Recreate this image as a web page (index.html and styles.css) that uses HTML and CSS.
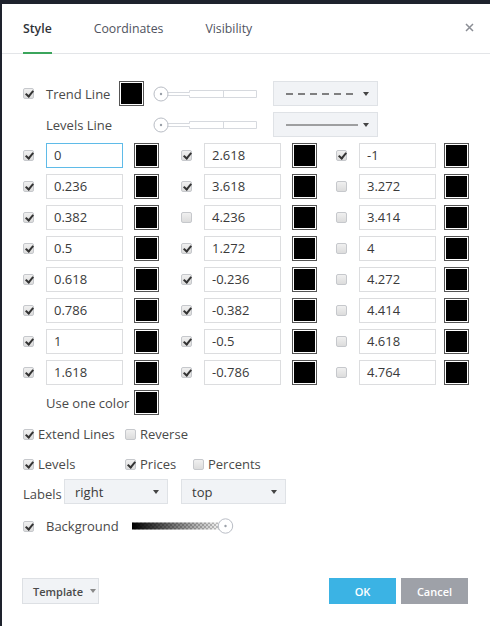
FILE: index.html
```html
<!DOCTYPE html>
<html>
<head>
<meta charset="utf-8">
<link rel="stylesheet" href="styles.css">
</head>
<body>
<div class="dialog">
  <div class="tabs">
    <div class="tab active">Style</div>
    <div class="tab">Coordinates</div>
    <div class="tab">Visibility</div>
    <div class="close"><svg width="9" height="9" viewBox="0 0 9 9"><path d="M1 1L8 8M8 1L1 8" stroke="#8b8e95" stroke-width="1.5"/></svg></div>
  </div>
  <div class="content">
    <div class="row">
      <span class="cb on"></span>
      <span class="lbl w73">Trend Line</span>
      <span class="sw"></span>
      <svg class="slider" width="104" height="16" viewBox="0 0 104 16"><path d="M15 6.5H36.5V4.5H103.5V11.5H36.5V9.5H15" fill="#fff" stroke="#d6d9de"/><path d="M70.5 4.5V11.5" stroke="#d6d9de"/><circle cx="8" cy="8" r="7" fill="#fff" stroke="#b9bdc5"/><circle cx="8" cy="8" r="1.2" fill="#9aa0a8"/></svg>
      <span class="sel">
        <svg width="72" height="4" viewBox="0 0 72 4"><path d="M0 2H72" stroke="#5a5a5a" stroke-width="1.6" stroke-dasharray="7 5"/></svg>
        <span class="tri"></span>
      </span>
    </div>
    <div class="row r2">
      <span class="lbl ind w107">Levels Line</span>
      <svg class="slider s2" width="104" height="16" viewBox="0 0 104 16"><path d="M15 6.5H36.5V4.5H103.5V11.5H36.5V9.5H15" fill="#fff" stroke="#d6d9de"/><path d="M70.5 4.5V11.5" stroke="#d6d9de"/><circle cx="8" cy="8" r="7" fill="#fff" stroke="#b9bdc5"/><circle cx="8" cy="8" r="1.2" fill="#9aa0a8"/></svg>
      <span class="sel">
        <svg width="72" height="4" viewBox="0 0 72 4"><path d="M0 2H72" stroke="#4a4a4a" stroke-width="1"/></svg>
        <span class="tri"></span>
      </span>
    </div>
    <div class="levels">
      <div class="lv"><span class="cb on"></span><span class="inp focus">0</span><span class="sw"></span></div>
      <div class="lv"><span class="cb on"></span><span class="inp">2.618</span><span class="sw"></span></div>
      <div class="lv c3"><span class="cb on"></span><span class="inp">-1</span><span class="sw"></span></div>

      <div class="lv"><span class="cb on"></span><span class="inp">0.236</span><span class="sw"></span></div>
      <div class="lv"><span class="cb on"></span><span class="inp">3.618</span><span class="sw"></span></div>
      <div class="lv c3"><span class="cb"></span><span class="inp">3.272</span><span class="sw"></span></div>

      <div class="lv"><span class="cb on"></span><span class="inp">0.382</span><span class="sw"></span></div>
      <div class="lv"><span class="cb"></span><span class="inp">4.236</span><span class="sw"></span></div>
      <div class="lv c3"><span class="cb"></span><span class="inp">3.414</span><span class="sw"></span></div>

      <div class="lv"><span class="cb on"></span><span class="inp">0.5</span><span class="sw"></span></div>
      <div class="lv"><span class="cb on"></span><span class="inp">1.272</span><span class="sw"></span></div>
      <div class="lv c3"><span class="cb"></span><span class="inp">4</span><span class="sw"></span></div>

      <div class="lv"><span class="cb on"></span><span class="inp">0.618</span><span class="sw"></span></div>
      <div class="lv"><span class="cb on"></span><span class="inp">-0.236</span><span class="sw"></span></div>
      <div class="lv c3"><span class="cb"></span><span class="inp">4.272</span><span class="sw"></span></div>

      <div class="lv"><span class="cb on"></span><span class="inp">0.786</span><span class="sw"></span></div>
      <div class="lv"><span class="cb on"></span><span class="inp">-0.382</span><span class="sw"></span></div>
      <div class="lv c3"><span class="cb"></span><span class="inp">4.414</span><span class="sw"></span></div>

      <div class="lv"><span class="cb on"></span><span class="inp">1</span><span class="sw"></span></div>
      <div class="lv"><span class="cb on"></span><span class="inp">-0.5</span><span class="sw"></span></div>
      <div class="lv c3"><span class="cb"></span><span class="inp">4.618</span><span class="sw"></span></div>

      <div class="lv"><span class="cb on"></span><span class="inp">1.618</span><span class="sw"></span></div>
      <div class="lv"><span class="cb on"></span><span class="inp">-0.786</span><span class="sw"></span></div>
      <div class="lv c3"><span class="cb"></span><span class="inp">4.764</span><span class="sw"></span></div>
    </div>
    <div class="row r-one">
      <span class="lbl ind w88">Use one color</span>
      <span class="sw"></span>
    </div>
    <div class="row r-chk r-ext">
      <span class="opt w102"><span class="cb on"></span><span class="lbl">Extend Lines</span></span>
      <span class="opt"><span class="cb"></span><span class="lbl">Reverse</span></span>
    </div>
    <div class="row r-chk r-lev">
      <span class="opt w102"><span class="cb on"></span><span class="lbl">Levels</span></span>
      <span class="opt w68"><span class="cb on"></span><span class="lbl">Prices</span></span>
      <span class="opt"><span class="cb"></span><span class="lbl">Percents</span></span>
    </div>
    <div class="row r-labels">
      <span class="lbl w41 low">Labels</span>
      <span class="sel dd"><span class="val">right</span><span class="tri"></span></span>
      <span class="sel dd dd2"><span class="val">top</span><span class="tri"></span></span>
    </div>
    <div class="row r-bg">
      <span class="cb on"></span>
      <span class="lbl w86">Background</span>
      <svg width="102" height="16" viewBox="0 0 102 16">
        <defs>
          <pattern id="chk" width="4" height="4" patternUnits="userSpaceOnUse">
            <rect width="4" height="4" fill="#fff"/>
            <rect width="2" height="2" fill="#c8c8c8"/>
            <rect x="2" y="2" width="2" height="2" fill="#c8c8c8"/>
          </pattern>
          <linearGradient id="gr" x1="0" x2="1" y1="0" y2="0">
            <stop offset="0" stop-color="#000" stop-opacity="1"/>
            <stop offset="1" stop-color="#000" stop-opacity="0"/>
          </linearGradient>
        </defs>
        <rect x="0" y="4.5" width="92" height="7" fill="url(#chk)"/>
        <rect x="0" y="4.5" width="92" height="7" fill="url(#gr)"/>
        <circle cx="93.5" cy="8" r="7.2" fill="#fff" stroke="#b9bdc5"/>
        <circle cx="93.5" cy="8" r="1.2" fill="#9aa0a8"/>
      </svg>
    </div>
  </div>
  <div class="footer">
    <span class="btn tpl"><span>Template</span><span class="tri"></span></span>
    <span class="spacer"></span>
    <span class="btn ok">OK</span>
    <span class="btn cancel">Cancel</span>
  </div>
</div>
</body>
</html>
```
FILE: styles.css
```css
* { box-sizing: border-box; }
html, body { margin: 0; padding: 0; }
body {
  background: #1e222d;
  width: 490px;
  height: 626px;
  overflow: hidden;
  font-family: "Open Sans", "DejaVu Sans", sans-serif;
  font-size: 13px;
  color: #4a4a4a;
}
.dialog {
  margin: 4px 0 0 2px;
  width: 488px;
  height: 622px;
  background: #fff;
  display: flex;
  flex-direction: column;
}
.tabs {
  height: 50px;
  display: flex;
  align-items: flex-start;
  padding-left: 21px;
  border-bottom: 1px solid #e3e5e8;
  flex: none;
  font-size: 12.3px;
}
.tab {
  height: 49px;
  padding-top: 16px;
  line-height: 18px;
  margin-right: 42px;
  color: #50535e;
  border-bottom: 2px solid transparent;
}
.tab.active {
  font-weight: 600;
  color: #2f3238;
  border-bottom-color: #3ba55c;
  height: 50px;
}
.close {
  margin-left: auto;
  margin-right: 16px;
  margin-top: 19px;
  width: 9px;
  height: 9px;
  display: flex;
}
.content {
  padding: 27px 0 0 21px;
}
.row {
  display: flex;
  align-items: center;
  height: 25px;
}
.r2 { margin-top: 6px; }
.cb {
  flex: none;
  width: 11px;
  height: 11px;
  border: 1px solid #c6c8cc;
  border-radius: 2px;
  background: linear-gradient(#f0f0f0, #dcdcdc);
  position: relative;
}
.cb.on::after {
  content: "";
  position: absolute;
  left: 3px;
  top: 0px;
  width: 3px;
  height: 6px;
  border-right: 2px solid #333;
  border-bottom: 2px solid #333;
  transform: rotate(40deg);
}
.lbl { white-space: nowrap; line-height: 18px; }
.w73 { margin-left: 12px; width: 73px; flex: none; }
.ind { margin-left: 23px; }
.w107 { width: 106.7px; flex: none; }
.w88 { width: 88px; flex: none; }
.w86 { margin-left: 12px; width: 86px; flex: none; }
.w41 { width: 41px; flex: none; }
.low { margin-top: 5px; }
.sw {
  flex: none;
  width: 25px;
  height: 25px;
  background: #000;
  border: 1px solid #555;
  box-shadow: inset 0 0 0 1px #fff;
}
.slider { flex: none; margin-left: 8.7px; }
.s2 { margin-left: 0; }
.sel {
  flex: none;
  margin-left: 16px;
  width: 105px;
  height: 25px;
  background: #f1f3f6;
  border: 1px solid #dfe2e6;
  display: flex;
  align-items: center;
  padding-left: 12px;
}
.tri {
  margin-left: auto;
  margin-right: 8px;
  width: 0;
  height: 0;
  border-left: 3.5px solid transparent;
  border-right: 3.5px solid transparent;
  border-top: 4px solid #444;
}
.levels {
  margin-top: 6px;
  display: grid;
  grid-template-columns: 158px 155px 136px;
  grid-auto-rows: 25px;
  row-gap: 6px;
}
.lv {
  display: flex;
  align-items: center;
}
.inp {
  flex: none;
  margin-left: 12px;
  width: 77px;
  height: 25px;
  border: 1px solid #dcdddf;
  padding-left: 7px;
  line-height: 23px;
  color: #3a3a3a;
}
.inp.focus { border-color: #5fbbe8; }
.lv .sw { margin-left: 11px; }
.lv.c3 .sw { margin-left: 8px; }
.r-one { margin-top: 5px; }
.r-chk { height: 20px; }
.r-ext { margin-top: 9px; }
.r-lev { margin-top: 10px; }
.opt { display: flex; align-items: center; flex: none; }
.opt .cb { margin-right: 4px; }
.w102 { width: 102px; }
.w68 { width: 68px; }
.r-labels { margin-top: 5px; }
.dd { margin-left: 0; width: 104px; padding-left: 10px; }
.dd2 { margin-left: 13px; width: 105px; }
.val { color: #3a3a3a; line-height: 18px; }
.r-bg { margin-top: 12px; height: 20px; }
.footer {
  margin-top: auto;
  display: flex;
  align-items: center;
  padding: 0 22px 22px 20px;
}
.spacer { flex: 1; }
.btn {
  height: 26px;
  display: flex;
  align-items: center;
  justify-content: center;
  font-size: 11px;
  font-weight: 600;
}
.tpl {
  width: 77px;
  background: #f1f3f6;
  border: 1px solid #dde0e4;
  color: #4a4a4a;
  justify-content: flex-start;
  padding-left: 10px;
}
.tpl .tri { margin-left: 7px; margin-right: 0; border-top-color: #888; }
.ok {
  width: 67px;
  background: #3bb3e4;
  color: #fff;
  margin-right: 5px;
}
.cancel {
  width: 67px;
  background: #9ea1a8;
  color: #fff;
}
```
